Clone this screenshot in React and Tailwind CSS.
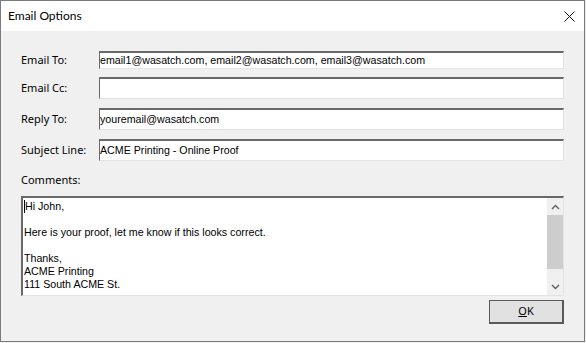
const ui = { fontFamily: '"Noto Sans", Lato, sans-serif' };
const title = { fontFamily: 'Lato, "Noto Sans", sans-serif' };
const ms = { fontFamily: '"Liberation Sans", Arial, sans-serif' };

const Field = ({ label, value, h = 'h-[22px]', className = '' }) => (
  <div className={`flex items-center ${className}`}>
    <div className="w-[78px] text-[11px] text-black" style={ui}>{label}</div>
    <div
      className={`flex-1 ${h} bg-white border-t-2 border-l border-t-[#696969] border-l-[#696969] border-b border-r border-b-[#e3e3e3] border-r-[#e3e3e3] flex items-center text-[10.67px] text-black leading-none`}
      style={ms}
    >
      {value}
    </div>
  </div>
);

const Chevron = ({ up }) => (
  <svg width="9" height="6" viewBox="0 0 9 6" className="text-[#606060]">
    <path d={up ? 'M1 5 L4.5 1.5 L8 5' : 'M1 1 L4.5 4.5 L8 1'} fill="none" stroke="currentColor" strokeWidth="1.4" />
  </svg>
);

const App = () => {
  return (
    <div className="w-[586px] h-[343px] bg-[#f0f0f0] overflow-hidden">
      <div className="w-[585px] h-[342px] border border-[#7a7a7a] flex flex-col bg-[#f0f0f0]">
        {/* Title bar */}
        <div className="h-[30px] bg-white flex items-center justify-between pl-[7px] pr-[9px]">
          <span className="text-[12px] text-black" style={title}>Email Options</span>
          <svg width="11" height="11" viewBox="0 0 11 11">
            <path d="M0.5 0.5 L10.5 10.5 M10.5 0.5 L0.5 10.5" stroke="#111" strokeWidth="1" />
          </svg>
        </div>

        {/* Body */}
        <div className="flex-1 px-[20px] pt-[20px] flex flex-col">
          <Field label="Email To:" h="h-[18px]" value="email1@wasatch.com, email2@wasatch.com, email3@wasatch.com" />
          <Field label="Email Cc:" value="" className="mt-[8px]" />
          <Field label="Reply To:" value="youremail@wasatch.com" className="mt-[9px]" />
          <Field label="Subject Line:" value="ACME Printing - Online Proof" className="mt-[9px]" />

          <div className="mt-[11px] text-[11px] text-black h-[16px] leading-[16px]" style={ui}>Comments:</div>

          <div className="mt-[8px] h-[100px] bg-white flex border-t-2 border-l-2 border-t-[#696969] border-l-[#696969] border-b border-r border-b-[#e3e3e3] border-r-[#e3e3e3]">
            <div className="flex-1 pl-[1px] pt-[2px] text-[10.67px] leading-[13px] text-black" style={ms}>
              <div className="border-l border-black w-fit">Hi John,</div>
              <div>&nbsp;</div>
              <div>Here is your proof, let me know if this looks correct.</div>
              <div>&nbsp;</div>
              <div>Thanks,</div>
              <div>ACME Printing</div>
              <div>111 South ACME St.</div>
            </div>
            <div className="w-[16px] bg-[#f0f0f0] flex flex-col">
              <div className="h-[17px] flex items-center justify-center"><Chevron up /></div>
              <div className="h-[54px] bg-[#cdcdcd]" />
              <div className="flex-1" />
              <div className="h-[17px] flex items-center justify-center"><Chevron /></div>
            </div>
          </div>

          <div className="mt-[4px] flex justify-end">
            <button
              className="w-[75px] h-[24px] bg-[#e1e1e1] border border-[#5a5a5a] border-r-2 border-b-2 text-[11px] text-black flex items-center justify-center"
              style={ui}
            >
              <span><span className="underline">O</span>K</span>
            </button>
          </div>
        </div>
      </div>
    </div>
  );
};

export default App;
